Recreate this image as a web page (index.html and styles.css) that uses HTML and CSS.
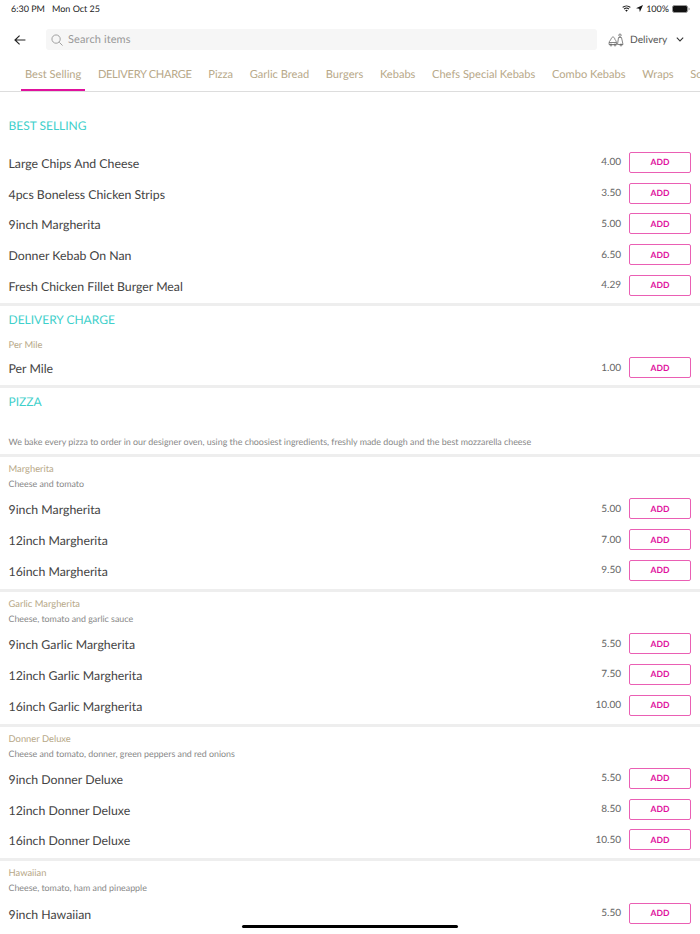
FILE: index.html
```html
<!DOCTYPE html>
<html lang="en">
<head>
    <meta charset="UTF-8">
    <meta name="viewport" content="width=device-width, initial-scale=1.0">
    <title>Menu</title>
    <link rel="stylesheet" href="styles.css">
</head>
<body>

    <div class="status-bar">
        <div class="status-time"><span>6:30 PM</span><span>Mon Oct 25</span></div>
        <div class="status-icons">
            <svg width="9" height="7" viewBox="0 0 11 8"><path d="M5.500 8 3.900 6.100a2.400 2.400 0 0 1 3.200 0z" fill="#111"/><path d="M2.600 4.700a4.300 4.300 0 0 1 5.800 0M.8 2.700a7 7 0 0 1 9.400 0" fill="none" stroke="#111" stroke-width="1.400"/></svg>
            <svg class="arrow-icon" width="7" height="7" viewBox="0 0 8 8"><path d="M8 0 0 3.600l3.700.6.7 3.800z" fill="#111"/></svg>
            <span>100%</span>
            <svg width="18" height="8" viewBox="0 0 18 8"><rect x="0.5" y="0.5" width="15" height="7" rx="1.800" fill="#111" stroke="#999"/><path d="M16.500 2.600c.8.2 1.200.7 1.200 1.400s-.4 1.200-1.200 1.400z" fill="#999"/></svg>
        </div>
    </div>

    <div class="top-bar">
        <svg class="back-icon" width="12" height="10" viewBox="0 0 14 12"><path d="M6.500.8 1 6l5.500 5.200M1 6h12.500" fill="none" stroke="#222" stroke-width="1.400"/></svg>
        <div class="search-box">
            <svg width="12" height="12" viewBox="0 0 13 13"><circle cx="5.500" cy="5.500" r="4.500" fill="none" stroke="#999" stroke-width="1"/><path d="M9 9l3.500 3.500" stroke="#999" stroke-width="1"/></svg>
            <span>Search items</span>
        </div>
        <div class="delivery-select">
            <svg width="16" height="14" viewBox="0 0 16 14" fill="none" stroke="#666" stroke-width="0.800"><path d="M1 11.500c0-2.500.5-4 2-5 .3-1.500 1-2.500 2-2.500s1.700 1 2 2.500c1 1 1.500 2.500 1.500 5z"/><path d="M1 9.500h7.500"/><circle cx="3" cy="12" r="1"/><circle cx="7" cy="12" r="1"/><circle cx="12" cy="2.200" r="1.200"/><path d="M10.500 4.500h3l1.500 7h-5.500z"/><circle cx="13" cy="12" r="1"/></svg>
            <span>Delivery</span>
            <svg width="8" height="5" viewBox="0 0 10 6"><path d="M1 .8l4 4 4-4" fill="none" stroke="#333" stroke-width="1.300"/></svg>
        </div>
    </div>

    <div class="tabs">
        <a class="tab active">Best Selling</a>
        <a class="tab tab-caps">DELIVERY CHARGE</a>
        <a class="tab">Pizza</a>
        <a class="tab">Garlic Bread</a>
        <a class="tab">Burgers</a>
        <a class="tab">Kebabs</a>
        <a class="tab">Chefs Special Kebabs</a>
        <a class="tab">Combo Kebabs</a>
        <a class="tab">Wraps</a>
        <a class="tab">Sous</a>
    </div>

    <div class="menu">
        <div class="section best-selling">
            <h2 class="section-title">BEST SELLING</h2>
            <div class="item"><span class="item-name">Large Chips And Cheese</span><span class="item-price">4.00</span><button>ADD</button></div>
            <div class="item"><span class="item-name">4pcs Boneless Chicken Strips</span><span class="item-price">3.50</span><button>ADD</button></div>
            <div class="item"><span class="item-name">9inch Margherita</span><span class="item-price">5.00</span><button>ADD</button></div>
            <div class="item"><span class="item-name">Donner Kebab On Nan</span><span class="item-price">6.50</span><button>ADD</button></div>
            <div class="item"><span class="item-name">Fresh Chicken Fillet Burger Meal</span><span class="item-price">4.29</span><button>ADD</button></div>
        </div>

        <div class="section delivery-charge">
            <h2 class="section-title">DELIVERY CHARGE</h2>
            <div class="group-name">Per Mile</div>
            <div class="item"><span class="item-name">Per Mile</span><span class="item-price">1.00</span><button>ADD</button></div>
        </div>

        <div class="section pizza">
            <h2 class="section-title">PIZZA</h2>
            <p class="section-desc">We bake every pizza to order in our designer oven, using the choosiest ingredients, freshly made dough and the best mozzarella cheese</p>
        </div>

        <div class="section group">
            <div class="group-name">Margherita</div>
            <div class="group-desc">Cheese and tomato</div>
            <div class="item"><span class="item-name">9inch Margherita</span><span class="item-price">5.00</span><button>ADD</button></div>
            <div class="item"><span class="item-name">12inch Margherita</span><span class="item-price">7.00</span><button>ADD</button></div>
            <div class="item"><span class="item-name">16inch Margherita</span><span class="item-price">9.50</span><button>ADD</button></div>
        </div>

        <div class="section group">
            <div class="group-name">Garlic Margherita</div>
            <div class="group-desc">Cheese, tomato and garlic sauce</div>
            <div class="item"><span class="item-name">9inch Garlic Margherita</span><span class="item-price">5.50</span><button>ADD</button></div>
            <div class="item"><span class="item-name">12inch Garlic Margherita</span><span class="item-price">7.50</span><button>ADD</button></div>
            <div class="item"><span class="item-name">16inch Garlic Margherita</span><span class="item-price">10.00</span><button>ADD</button></div>
        </div>

        <div class="section group">
            <div class="group-name">Donner Deluxe</div>
            <div class="group-desc">Cheese and tomato, donner, green peppers and red onions</div>
            <div class="item"><span class="item-name">9inch Donner Deluxe</span><span class="item-price">5.50</span><button>ADD</button></div>
            <div class="item"><span class="item-name">12inch Donner Deluxe</span><span class="item-price">8.50</span><button>ADD</button></div>
            <div class="item"><span class="item-name">16inch Donner Deluxe</span><span class="item-price">10.50</span><button>ADD</button></div>
        </div>

        <div class="section group last-group">
            <div class="group-name">Hawaiian</div>
            <div class="group-desc">Cheese, tomato, ham and pineapple</div>
            <div class="item"><span class="item-name">9inch Hawaiian</span><span class="item-price">5.50</span><button>ADD</button></div>
        </div>
    </div>

    <div class="home-indicator"></div>

</body>
</html>
```

FILE: styles.css
```css
* {
    margin: 0;
    padding: 0;
    box-sizing: border-box;
    font-family: Lato, "Liberation Sans", sans-serif;
    text-rendering: geometricPrecision;
}

html {
    height: 934px;
    overflow: hidden;
}

body {
    width: 700px;
    height: 934px;
    overflow: hidden;
    background: #fff;
    position: relative;
}

.status-bar {
    display: flex;
    justify-content: space-between;
    align-items: center;
    height: 17px;
    padding: 0 10px 0 11px;
    font-size: 9px;
    color: #222;
}

.status-time {
    display: flex;
    gap: 7px;
}

.status-icons {
    display: flex;
    align-items: center;
    gap: 3px;
}

.arrow-icon {
    margin-left: 2px;
}

.top-bar {
    display: flex;
    align-items: center;
    height: 21px;
    margin-top: 12px;
    padding-left: 14px;
}

.back-icon {
    margin-right: 20px;
}

.search-box {
    display: flex;
    align-items: center;
    gap: 5px;
    width: 551px;
    height: 21px;
    padding-left: 5px;
    background: #f6f6f6;
    border-radius: 3px;
    font-size: 11px;
    letter-spacing: 0.1px;
    color: #999;
}

.delivery-select {
    display: flex;
    align-items: center;
    margin-left: 11px;
    font-size: 10.200px;
    color: #555;
}

.delivery-select span {
    margin: 0 9px 0 6px;
}

.tabs {
    display: flex;
    gap: 8.600px;
    height: 42px;
    padding-left: 21px;
    overflow: hidden;
    border-bottom: 1px solid #ddd;
    white-space: nowrap;
}

.tab {
    flex: none;
    height: 41px;
    line-height: 50px;
    padding: 0 4px;
    font-size: 11.100px;
    color: #b7a888;
}

.tab-caps {
    letter-spacing: -0.3px;
}

.tab.active {
    border-bottom: 2px solid #e0119d;
}

.section {
    border-bottom: 3px solid #eee;
    padding: 0 9px 0 8.500px;
}

.section-title {
    font-size: 12px;
    font-weight: 400;
    line-height: 16px;
    color: #3fd0cb;
}

.best-selling {
    height: 214px;
    padding-top: 26px;
}

.best-selling .section-title {
    margin-bottom: 13px;
}

.delivery-charge {
    height: 82px;
    padding-top: 5.500px;
}

.delivery-charge .section-title {
    margin-bottom: 10px;
}

.pizza {
    height: 69px;
    padding-top: 5.500px;
}

.section-desc {
    margin-top: 24.500px;
    font-size: 8.900px;
    line-height: 15px;
    color: #888;
}

.group {
    height: 134.750px;
    padding-top: 5px;
}

.last-group {
    height: auto;
    border-bottom: none;
}

.group-name {
    font-size: 9.400px;
    line-height: 15px;
    color: #b7a888;
}

.group-desc {
    font-size: 8.850px;
    line-height: 14px;
    color: #888;
    margin-bottom: 2.500px;
}

.item {
    display: flex;
    align-items: center;
    height: 30.750px;
}

.item-name {
    flex: 1;
    padding-top: 2px;
    font-size: 12.300px;
    color: #444;
}

.item-price {
    margin-right: 8px;
    font-size: 10px;
    color: #666;
}

button {
    width: 62px;
    height: 21px;
    background: #fff;
    border: 1.300px solid #ea5fb4;
    border-radius: 2px;
    font-size: 8.500px;
    font-weight: 700;
    color: #e0119d;
}

.home-indicator {
    position: absolute;
    left: 242px;
    top: 925px;
    width: 216px;
    height: 3px;
    border-radius: 2px;
    background: #000;
}
```
